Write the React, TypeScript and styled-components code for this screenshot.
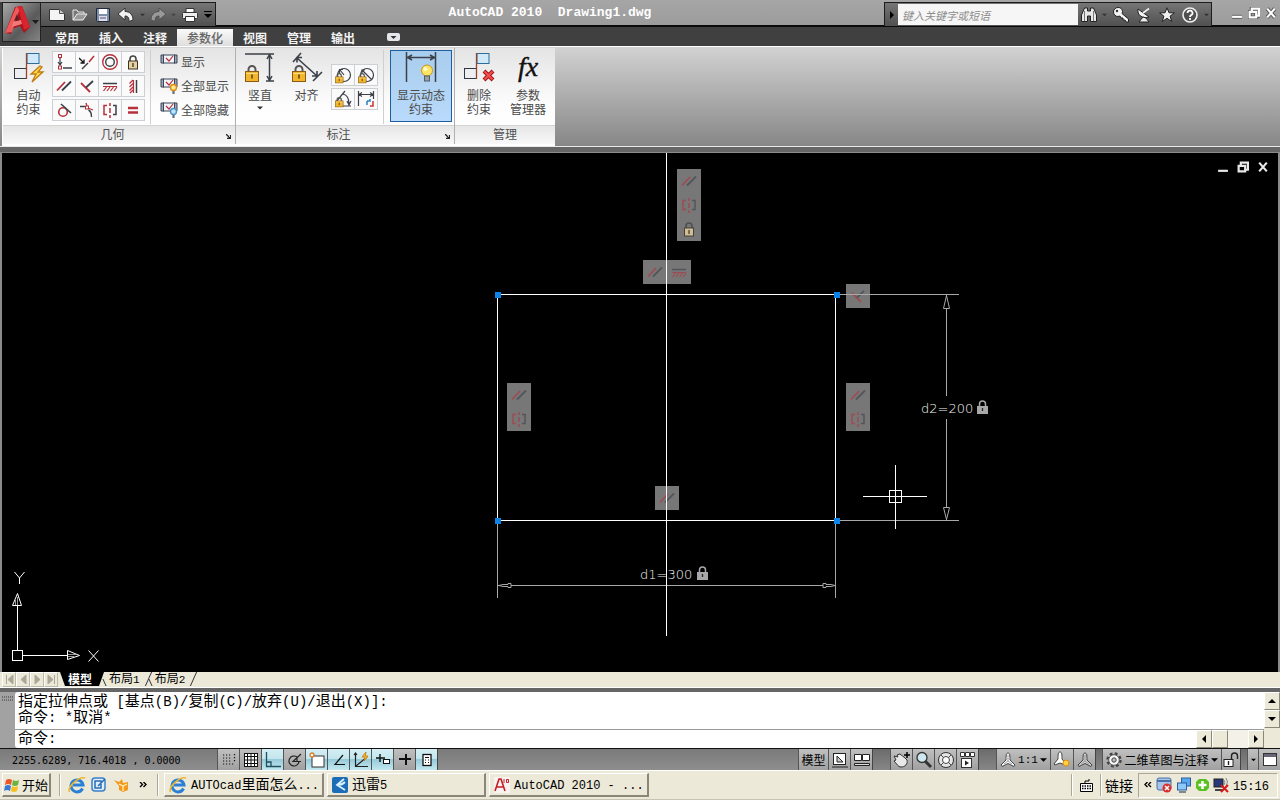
import React from "react";
import styled, { createGlobalStyle, css } from "styled-components";

const CJK = '"Noto Sans CJK SC", sans-serif';
const MONO = '"Liberation Mono", "Noto Sans CJK SC", monospace';

const Global = createGlobalStyle`
  *, *::before, *::after { box-sizing: border-box; }
  html, body { margin: 0; height: 100%; background: #666; }
  #root { height: 100%; }
  body { font-family: ${CJK}; font-size: 12px; line-height: 14px; color: #222; overflow: hidden; }
  button, input { font: inherit; color: inherit; margin: 0; padding: 0; border: 0; background: none; border-radius: 0; outline: 0; }
  svg { display: block; flex: none; }
`;

const Window = styled.div`
  display: flex;
  flex-direction: column;
  min-height: 100vh;
  overflow: hidden;
`;

/* Half-width Latin runs inside full-width Chinese text */
const Half = styled.span<{ $size: number }>`
  font-family: ${MONO};
  font-size: ${(p) => p.$size}px;
`;
function Mixed({ text, latin }: { text: string; latin: number }) {
  return (
    <>
      {text.split(/([\x20-\x7e]+)/).map((part, i) =>
        i % 2 ? <Half key={i} $size={latin}>{part}</Half> : part
      )}
    </>
  );
}

/* ---------- header ---------- */
const Header = styled.header`
  display: flex;
  background: #404040;
  height: 46px;
`;
const AppButton = styled.button`
  width: 39px;
  height: 40px;
  margin: 2px 0 0 2px;
  border: 1px solid #222;
  background: linear-gradient(135deg, #a8a8a8, #5a5a5a 60%, #858585);
`;
const AppSlot = styled.div`
  width: 41px;
  flex: none;
  background: linear-gradient(#a2a2a2 2px, #404040 2px);
`;
const HeaderRows = styled.div`
  flex: 1;
  min-width: 0;
`;
const TitleRow = styled.div`
  display: flex;
  height: 27px;
  background: linear-gradient(#a6a6a6, #9c9c9c);
  border-bottom: 2px solid #0a0a0a;
`;
const bar = css`
  display: flex;
  align-items: center;
  height: 24px;
  margin-top: 2px;
  border: 1px solid #1c1c1c;
  border-bottom: 0;
  background: linear-gradient(#767676, #505050);
`;
const QuickBar = styled.div`
  ${bar}
  width: 175px;
  padding-left: 5px;
  border-left: 0;
`;
const BarButton = styled.button<{ $w: number }>`
  width: ${(p) => p.$w}px;
  height: 20px;
  display: flex;
  align-items: center;
  justify-content: center;
`;
const Title = styled.h1`
  flex: 1;
  margin: 0;
  text-align: center;
  white-space: pre;
  font: bold 13px/26px ${MONO};
  color: #fff;
`;
const SearchBar = styled.form`
  ${bar}
  width: 328px;
`;
const SearchInput = styled.input`
  width: 180px;
  height: 21px;
  padding-left: 4px;
  background: #f6f6f6;
  font-size: 11px;
  &::placeholder { color: #8c8c8c; font-style: italic; opacity: 1; }
`;
const WinButtons = styled.div`
  display: flex;
  align-items: center;
  padding-left: 17px;
  width: 68px;
`;
const Tabs = styled.nav`
  display: flex;
  height: 19px;
  padding-left: 4px;
  align-items: flex-end;
`;
const Tab = styled.button<{ $on?: boolean }>`
  height: 17px;
  padding: 0 10px;
  line-height: 14px;
  font-weight: bold;
  color: #f4f4f4;
  ${(p) => p.$on && css`
    background: linear-gradient(#fafafa, #dedede);
    color: #666;
    font-weight: 500;
  `}
`;
const TabMore = styled.button`
  margin: 0 0 5px 22px;
`;

/* ---------- ribbon ---------- */
const Ribbon = styled.section`
  display: flex;
  height: 101px;
  padding: 1px 0 2px 2px;
  border-top: 1px solid #fff;
  border-bottom: 1px solid #e8e8e8;
  background: linear-gradient(#d2d2d2, #878787);
`;
const Panel = styled.div`
  display: flex;
  flex-direction: column;
  border-right: 1px solid #b0b0b0;
  background: linear-gradient(#e4e4e4, #fdfdfd 60%, #fff);
  box-shadow: 0 2px 0 #fff;
  &:first-child { border-left: 1px solid #fff; }
  &:last-child { border-right: 0; }
`;
const PanelBody = styled.div<{ $pad?: number }>`
  flex: 1;
  display: flex;
  align-items: flex-start;
  padding: 2px 2px 0 ${(p) => p.$pad ?? 2}px;
`;
const PanelTitle = styled.div<{ $launcher?: boolean }>`
  position: relative;
  height: 19px;
  padding-right: ${(p) => (p.$launcher ? 13 : 0)}px;
  line-height: 15px;
  border-top: 1px solid #d4d4d4;
  background: linear-gradient(#e6e6e6, #f8f8f8);
  text-align: center;
  color: #505050;
`;
const Launcher = styled.button`
  position: absolute;
  right: 4px;
  bottom: 5px;
`;
const Big = styled.button<{ $w: number; $on?: boolean }>`
  width: ${(p) => p.$w}px;
  height: 72px;
  display: flex;
  flex-direction: column;
  align-items: center;
  gap: 4px;
  padding-top: 1px;
  border: 1px solid transparent;
  line-height: 14px;
  white-space: pre-line;
  color: #4a4a4a;
  ${(p) => p.$on && css`
    border-color: #1f5f9f;
    background: linear-gradient(#a9cdee, #b9dafa);
  `}
`;
const Grid = styled.div<{ $cols: number; $top?: number }>`
  display: grid;
  grid-template-columns: repeat(${(p) => p.$cols}, 23px);
  row-gap: 2px;
  margin-top: ${(p) => p.$top ?? 1}px;
`;
const Cell = styled.button`
  width: 24px;
  height: 22px;
  display: flex;
  align-items: center;
  justify-content: center;
  border: 1px solid #ccd0d4;
  background: #fafafa;
`;
const Sep = styled.i`
  width: 1px;
  height: 74px;
  margin: 0 6px;
  background: #cfcfcf;
`;
const List = styled.div`
  display: flex;
  flex-direction: column;
  padding: 0 4px 0 3px;
`;
const ListButton = styled.button`
  display: flex;
  align-items: center;
  gap: 3px;
  height: 24px;
  color: #4a4a4a;
`;

/* ---------- drawing area ---------- */
const View = styled.main`
  position: relative;
  flex: 1;
  min-height: 300px;
  margin-top: 5px;
  border: solid #8c8c8c;
  border-width: 1px 2px 0;
  background: #000;
`;
const Drawing = styled.svg`
  position: absolute;
  inset: 0;
  width: 100%;
  height: 100%;
`;
const Ucs = styled.svg`
  position: absolute;
  left: 8px;
  bottom: 0;
`;
const DocButtons = styled.div`
  position: absolute;
  top: 8px;
  right: 9px;
  display: flex;
  gap: 8px;
`;

/* ---------- layout tabs ---------- */
const Sheets = styled.nav`
  display: flex;
  height: 16px;
  padding-left: 2px;
  background: #ece9d8;
  border-bottom: 1px solid #fff;
`;
const SheetNav = styled.button`
  width: 14px;
  height: 15px;
  display: flex;
  align-items: center;
  justify-content: center;
  border: 1px solid;
  border-color: #fff #bdb9a8 #bdb9a8 #fff;
`;
const Sheet = styled.button<{ $on?: boolean }>`
  position: relative;
  height: 14px;
  line-height: 12px;
  padding: 0 8px 0 7px;
  color: #000;
  ${(p) => p.$on ? css`
    margin: 0 -2px 0 2px;
    padding: 0 12px 0 8px;
    background: #000;
    color: #fff;
    font-weight: bold;
    clip-path: polygon(0 0, 100% 0, calc(100% - 5px) 100%, 5px 100%);
  ` : css`
    &::before, &::after {
      content: "";
      position: absolute;
      right: -1px;
      top: 0;
      height: 14px;
      border-right: 1px solid #333;
      transform: skewX(-24deg);
    }
    &::before {
      right: auto;
      left: 2px;
      top: 7px;
      height: 7px;
      transform: skewX(24deg);
    }
  `}
`;

/* ---------- command window ---------- */
const Command = styled.section`
  display: flex;
  height: 56px;
  margin-top: 4px;
  background: #a2a2a2;
`;
const Grip = styled.div`
  width: 15px;
  padding: 4px 0 0 2px;
`;
const CmdText = styled.div`
  flex: 1;
  display: flex;
  flex-direction: column;
  background: #fff;
  border-radius: 3px 0 0 3px;
  font-family: ${MONO};
  font-size: 15px;
  line-height: 16px;
  color: #000;
`;
const History = styled.div`
  height: 38px;
  padding: 2px 0 0 3px;
  border-bottom: 1px solid #999;
  white-space: pre;
  > div { height: 16px; }
`;
const CmdInputRow = styled.div`
  flex: 1;
  display: flex;
  align-items: center;
  padding-left: 3px;
  > input { flex: 1; height: 16px; font-size: 14px; }
`;
const ScrollV = styled.div`
  width: 16px;
  display: flex;
  flex-direction: column;
  background: #ece9d8;
`;
const ScrollH = styled.div`
  display: flex;
  width: 68px;
  height: 18px;
  background: #f3f1e8;
`;
const raised = css`
  border: 1px solid;
  border-color: #fff #8a8778 #8a8778 #fff;
  background: #ece9d8;
`;
const ScrollButton = styled.button`
  ${raised}
  display: flex;
  align-items: center;
  justify-content: center;
  width: 16px;
  height: 18px;
`;
const Spacer = styled.i`
  flex: 1;
`;

/* ---------- status bar ---------- */
const Status = styled.footer`
  display: flex;
  height: 22px;
  border-top: 1px solid #111;
  background: linear-gradient(#7a7a7a, #8e8e8e);
  color: #000;
`;
const Coords = styled.output`
  width: 217px;
  padding-left: 12px;
  font: 10px/24px "DejaVu Sans Mono", monospace;
  white-space: pre;
`;
const StatusButton = styled.button<{ $w?: number; $on?: boolean }>`
  width: ${(p) => p.$w ?? 22}px;
  height: 21px;
  display: flex;
  align-items: center;
  justify-content: center;
  gap: 2px;
  white-space: nowrap;
  border-left: 1px solid #555;
  background: ${(p) =>
    p.$on
      ? "linear-gradient(#d4eef4, #c4e6ee 45%, #96cbd9 50%, #c2e8f0)"
      : "linear-gradient(#c0c0c0, #a0a0a0)"};
`;
const StatusGap = styled.i<{ $w: number }>`
  width: ${(p) => p.$w}px;
  border-left: 1px solid #444;
  background: linear-gradient(#6c6c6c, #868686);
`;

/* ---------- taskbar ---------- */
const Taskbar = styled.footer`
  display: flex;
  align-items: center;
  height: 30px;
  padding: 0 2px;
  border-top: 1px solid #fff;
  border-bottom: 1px solid #c8c4b4;
  background: #ece9d8;
  font-size: 14px;
  line-height: 18px;
  color: #000;
`;
const TaskButton = styled.button<{ $w: number; $start?: boolean }>`
  ${raised}
  border-width: 1px 2px 2px 1px;
  width: ${(p) => p.$w}px;
  height: 24px;
  margin-right: 3px;
  padding: 0 4px;
  display: flex;
  align-items: center;
  gap: 4px;
  white-space: pre;
  ${(p) => p.$start && css`
    padding: 0 1px;
    gap: 1px;
    font-size: 13px;
    margin: 0;
  `}
`;
const Divider = styled.i<{ $m: string }>`
  width: 2px;
  height: 22px;
  margin: ${(p) => p.$m};
  border-left: 1px solid #aca899;
  border-right: 1px solid #fff;
`;
const Launch = styled.button`
  width: 22px;
  height: 22px;
  display: flex;
  align-items: center;
  justify-content: center;
`;
const Tray = styled.div`
  display: flex;
  align-items: center;
  justify-content: space-between;
  width: 140px;
  height: 25px;
  margin-left: 5px;
  padding: 0 8px 0 5px;
  border: 1px solid;
  border-color: #aca899 #fff #fff #aca899;
`;

/* ---------- icons ---------- */
type P = { children?: React.ReactNode; w?: number; h?: number; vb?: string };
const Svg = ({ children, w = 16, h = 16, vb }: P) => (
  <svg width={w} height={h} viewBox={vb ?? `0 0 ${w} ${h}`} fill="none" aria-hidden="true">{children}</svg>
);
const Down = ({ c = "#000", s = 7 }: { c?: string; s?: number }) => (
  <Svg w={s} h={4} vb="0 0 8 4"><path d="M0 0h8L4 4z" fill={c} /></Svg>
);
const R = "#b8303a";
const D = "#3c4048";

const glyphs = {
  coincident: <><path d="M4 4v6M2 8l2 3 2-3" stroke={D} strokeWidth="1.2" /><rect x="2.500" y="0.500" width="3" height="3" stroke={R} /><rect x="2.500" y="12" width="3" height="3" stroke={R} /><path d="M7 14h9" stroke={D} strokeWidth="1.500" /></>,
  collinear: <><path d="M0 4l5 5M5 5.500V9H1.500" stroke="#111" strokeWidth="1.300" /><path d="M3 15l6-6" stroke={D} strokeWidth="1.500" /><path d="M10 8l5-6" stroke={R} strokeWidth="1.500" /></>,
  concentric: <><circle cx="8" cy="8" r="7.300" stroke={R} strokeWidth="1.400" /><circle cx="8" cy="8" r="4.300" stroke={D} strokeWidth="1.400" /></>,
  fix: <><path d="M5 7V5a3 3 0 0 1 6 0v2" stroke="#444" strokeWidth="1.600" /><rect x="3.500" y="7" width="9" height="8" fill="#e8cf9e" stroke="#3b3328" /><path d="M8 9v4" stroke="#3b3328" strokeWidth="1.300" /></>,
  parallel: <><path d="M1 12.500L9 4" stroke={R} strokeWidth="1.800" /><path d="M6 12.500L15 3.500" stroke={D} strokeWidth="1.800" /></>,
  perpendicular: <><path d="M2 5l9 9" stroke={R} strokeWidth="1.800" /><path d="M7 9.500L14 3" stroke={D} strokeWidth="1.800" /></>,
  horizontal: <><path d="M1 5.500h14" stroke={D} strokeWidth="1.500" /><path d="M1 8.500h14M4.500 9l-3 4M8 9l-3 4M11.500 9l-3 4M15 9l-3 4" stroke={R} strokeWidth="1.200" /></>,
  vertical: <><path d="M11.500 2v13" stroke={D} strokeWidth="1.500" /><path d="M8.500 2v13M8 2L4.500 5.500M8 5.500L4.500 9M8 9l-3.500 3.500M8 12l-3 3" stroke={R} strokeWidth="1.200" /></>,
  tangent: <><circle cx="7" cy="10" r="4.300" stroke={R} strokeWidth="1.600" /><path d="M5 2l10 9" stroke={D} strokeWidth="1.600" /></>,
  smooth: <><path d="M1 4.500h5M9.500 8c2 1 3 3 3 7" stroke={D} strokeWidth="1.400" /><path d="M7 1l1 3M9 6l5 2" stroke={R} strokeWidth="1.300" /><rect x="6.500" y="4" width="3" height="3" stroke={R} fill="none" /></>,
  symmetric: <><path d="M5 3.500H2v9h3M8 1v3M8 6v5M8 13v3" stroke={R} strokeWidth="1.500" /><path d="M11 3.500h3v9h-3" stroke={D} strokeWidth="1.500" /></>,
  equal: <path d="M3 6h10M3 10.500h10" stroke={R} strokeWidth="2.400" />,
};
type G = keyof typeof glyphs;
const cells: [G, string][] = [
  ["coincident", "重合"], ["collinear", "共线"], ["concentric", "同心"], ["fix", "固定"],
  ["parallel", "平行"], ["perpendicular", "垂直"], ["horizontal", "水平"], ["vertical", "竖直"],
  ["tangent", "相切"], ["smooth", "平滑"], ["symmetric", "对称"], ["equal", "相等"],
];

const Gold = ({ x, y, s = 1 }: { x: number; y: number; s?: number }) => (
  <g transform={`translate(${x} ${y}) scale(${s})`}>
    <path d="M3.500 7V4.500a3.500 3.500 0 0 1 7 0V7" stroke="#555" strokeWidth="2" />
    <rect x="0.500" y="6.500" width="13" height="10" fill="#f2b62c" stroke="#8c5a10" />
    <path d="M1.500 8.500h11" stroke="#ffe08a" />
    <path d="M7 9.500v4" stroke="#5e3c08" strokeWidth="1.500" />
  </g>
);
const Squares = () => (
  <>
    <rect x="14" y="1.500" width="12" height="10" fill="#cfe8fa" stroke="#2d6d9c" />
    <rect x="1.500" y="16.500" width="12" height="10" fill="#eceef2" stroke="#303844" />
    <path d="M13.500 27V1" stroke="#9a4228" strokeWidth="1.300" />
  </>
);
const AutoIcon = () => (
  <Svg w={32} h={32}><Squares /><path d="M27 14l-9 8h5l-4 8 11-10h-5l4-5z" fill="#ffd84a" stroke="#c07a10" strokeWidth="1.300" /></Svg>
);
const DeleteIcon = () => (
  <Svg w={32} h={32}><Squares /><path d="M21 19l9 9M30 19l-9 9" stroke="#a01010" strokeWidth="4" /><path d="M21.500 19.500l8 8M29.500 19.500l-8 8" stroke="#f25050" strokeWidth="2.200" /></Svg>
);
const VertIcon = () => (
  <Svg w={32} h={32}><path d="M1 2h29M22 29h8M25.500 3v25M23 7l2.500-4.500L28 7M23 24l2.500 4.500L28 24" stroke={D} strokeWidth="1.500" /><Gold x={1} y={13} /></Svg>
);
const AlignIcon = () => (
  <Svg w={32} h={32}><path d="M2 10l8-9M22 29l9-9M6 6l20 18M6 10.500V5.500h5M26 19v5h-5" stroke={D} strokeWidth="1.600" /><Gold x={1} y={13} /></Svg>
);
const DynIcon = () => (
  <Svg w={32} h={32}>
    <path d="M1.500 0v30M30.500 0v30M3 5.500h26M7 3L2.500 5.500 7 8M25 3l4.500 2.500L25 8" stroke={D} strokeWidth="1.500" />
    <circle cx="22" cy="18.500" r="5.500" fill="#ffe564" stroke="#c89418" />
    <circle cx="20.500" cy="17" r="2" fill="#fffbd0" />
    <rect x="19.500" y="24" width="5" height="5" fill="#9aa0a8" stroke="#555c66" />
  </Svg>
);
const FxIcon = () => (
  <Svg w={32} h={32}><text x="6" y="24" fontFamily="Liberation Serif, serif" fontStyle="italic" fontSize="28" fill="#111" stroke="#111" strokeWidth="0.4">fx</text></Svg>
);
const dims = {
  半径: <><circle cx="10" cy="9" r="6.500" stroke={D} strokeWidth="1.200" /><path d="M10 9L6 4M5.500 7V3.500H9" stroke={D} strokeWidth="1.200" /></>,
  直径: <><circle cx="10" cy="9" r="6.500" stroke={D} strokeWidth="1.200" /><path d="M5 4l10 10M5 7V4h3" stroke={D} strokeWidth="1.200" /></>,
  角度: <><path d="M2 12L11 1M8 16h9M9 4c4 1 6 5 6 10M13 11l2 4 2-4" stroke={D} strokeWidth="1.200" /></>,
};
const Eye = ({ bulb }: { bulb?: string }) => (
  <Svg w={18} h={18}>
    <path d="M4 2H1v8h3zM14 2h3v8h-3z" stroke="#3c4658" fill="#9aa6ba" />
    <rect x="3.500" y="2" width="11" height="8" fill="#f2f4f8" stroke="#3c4658" />
    <path d="M6 5l3 3 4-5" stroke={R} strokeWidth="1.200" />
    {bulb && <><circle cx="13.500" cy="10.500" r="3" fill={bulb} stroke={bulb === "#ffe890" ? "#e08a10" : "#4a90c8"} strokeWidth="1.400" /><path d="M13.500 14v3" stroke="#66707c" strokeWidth="2.200" /></>}
  </Svg>
);
const LaunchMark = () => (
  <Svg w={5} h={5}><path d="M0 0l4 4M4.500 1v3.500H1" stroke="#222" strokeWidth="1.300" /></Svg>
);

const Win = ({ kind, c, edge }: { kind: "min" | "max" | "close"; c: string; edge?: string }) => {
  const d = { min: "M1 9h9", max: "M3.500 4V1.500H10V8H8M1.500 4.500h6v5h-6z", close: "M2 1.500l7 8M9 1.500l-7 8" }[kind];
  return (
    <Svg w={12} h={12} vb="0 0 11 11">
      {edge && <path d={d} stroke={edge} strokeWidth="3.600" />}
      <path d={d} stroke={c} strokeWidth="2" />
    </Svg>
  );
};
const Ie = () => (
  <Svg w={18} h={18}>
    <path d="M14.500 12.500a6 6 0 1 1 .5-3.500H5" stroke="#2a7fd6" strokeWidth="3" />
    <path d="M1.500 16C-1 11 11 0 17 2" stroke="#f0b62c" strokeWidth="1.600" />
  </Svg>
);
const Scale = ({ c = "#fff" }: { c?: string }) => (
  <Svg w={16} h={16}><path d="M8 1c2 0 2 3 2 7l5 5-1 1.500-6-3-6 3L1 13l5-5c0-4 0-7 2-7z" fill={c} stroke="#444" /><path d="M8 3v6l4 3M8 9l-4 3" stroke="#999" /></Svg>
);

const toggles: [string, boolean, React.ReactNode][] = [
  ["捕捉", false, <path d="M2 3h9M2 6h9M2 9h9M2 12h12M13.500 2v2M13.500 5v5" stroke="#111" strokeWidth="1.200" strokeDasharray="1.200 1.800" />],
  ["栅格", false, <><rect x="1.500" y="1.500" width="13" height="13" fill="#fff" stroke="#111" /><path d="M4.500 1v14M8 1v14M11.500 1v14M1 4.500h14M1 8h14M1 11.500h14" stroke="#111" /></>],
  ["正交", true, <path d="M1.500 0v14.500H16M2 10h4v4" stroke="#20505f" strokeWidth="1.300" />],
  ["极轴", false, <><path d="M10 5a5 5 0 1 0 2 4" stroke="#222" strokeWidth="1.200" /><path d="M14 2L6 9.500h8M10 6v3" stroke="#222" strokeWidth="1.200" /></>],
  ["对象捕捉", true, <><rect x="3" y="4" width="12" height="11" fill="#fff" stroke="#333" /><circle cx="3" cy="3" r="2" fill="#fff" stroke="#e07820" strokeWidth="1.300" /></>],
  ["对象追踪", true, <path d="M12 3L4 12.500h10" stroke="#111" strokeWidth="1.200" />],
  ["动态 UCS", true, <><path d="M2.500 1v13.500H15M3 14L14 5M1 3l1.500-2L4 3" stroke="#222" strokeWidth="1.200" /><path d="M13 0l-4 5h3l-1 4 4-5h-3z" fill="#ffcf40" stroke="#d08010" /></>],
  ["动态输入", true, <><path d="M1 6h9M5 2v8" stroke="#111" strokeWidth="1.400" /><rect x="8.500" y="7.500" width="6" height="4" fill="#fff" stroke="#111" /></>],
  ["线宽", false, <path d="M2 7h12M9 2v11" stroke="#111" strokeWidth="2" />],
  ["快捷特性", true, <><rect x="4" y="2.500" width="8" height="11" fill="#fff" stroke="#111" strokeWidth="1.300" /><path d="M6 5.500h4M6 8h1M9 8h1M6 10.500h1M9 10.500h1" stroke="#111" strokeWidth="1.200" /></>],
];

/* Constraint badge placed on the drawing */
const Badge = ({ x, y, items, row }: { x: number; y: number; items: G[]; row?: boolean }) => (
  <g>
    <rect x={x} y={y} width={row ? 24 * items.length : 24} height={row ? 24 : 24 * items.length} fill="#777" />
    {items.map((g, i) => (
      <g key={i} opacity={g === "fix" ? 0.8 : 0.6} shapeRendering="auto"
        transform={`translate(${x + 4 + (row ? 24 * i : 0)} ${y + 4 + (row ? 0 : 24 * i)})`}>{glyphs[g]}</g>
    ))}
  </g>
);
const GreyLock = ({ x, y }: { x: number; y: number }) => (
  <g transform={`translate(${x} ${y})`} shapeRendering="auto">
    <path d="M2.500 7V4a3 3 0 0 1 6 0v3" stroke="#a8a8a8" strokeWidth="1.500" />
    <rect y="6" width="11" height="8" fill="#a8a8a8" />
    <path d="M5.500 8v3" stroke="#222" strokeWidth="1.300" />
  </g>
);

function Model() {
  const text = { fontFamily: "DejaVu Sans, sans-serif", fontWeight: 200, fontSize: 13, fill: "#f4f4f4" };
  return (
    <Drawing fill="none" shapeRendering="crispEdges" role="img" aria-label="Drawing1">
      <g transform="translate(-2 -153)">
        <Badge x={677} y={169} items={["parallel", "symmetric", "fix"]} />
        <Badge x={643} y={260} items={["parallel", "horizontal"]} row />
        <Badge x={846} y={284} items={["perpendicular"]} />
        <Badge x={846} y={383} items={["parallel", "symmetric"]} />
        <Badge x={507} y={383} items={["parallel", "symmetric"]} />
        <Badge x={655} y={486} items={["parallel"]} />
        <path stroke="#a8a8a8" d="M836 294.500h123M836 520.500h123M497.500 521v77M835.500 521v77M498 585.500h338M946.500 295v101M946.500 419v101" />
        <path stroke="#a8a8a8" fill="#000" shapeRendering="auto" d="M499 585.500l4-1h5v-1h3v4h-3v-1h-5zM835 585.500l-4-1h-5v-1h-3v4h3v-1h5zM946.500 295.500l-3 13h6zM946.500 519.500l-3-12h6z" />
        <path stroke="#fff" d="M666.500 153v483M497 294.500h339M497 520.500h339M497.500 294v227M835.500 294v227" />
        <path stroke="#fff" d="M863 496.500h64M895.500 465v64M889.500 490.500h12v12h-12z" />
        {[[495, 292], [834, 292], [495, 518], [834, 518]].map(([x, y]) => (
          <rect key={`${x}-${y}`} x={x} y={y} width="6" height="6" fill="#0a84e8" />
        ))}
        <text x="640" y="579" {...text}>d1=300</text>
        <GreyLock x={697} y={566} />
        <text x="921" y="413" {...text}>d2=200</text>
        <GreyLock x={977} y={400} />
      </g>
    </Drawing>
  );
}

export default function App() {
  return (
    <Window>
      <Global />
      <Header>
        <AppSlot>
          <AppButton aria-label="应用程序菜单">
            <Svg w={37} h={38}>
              <path d="M2 30L12 4l7-1 8 21-6 6-4-7-8 3-1 5z" fill="#a8141c" />
              <path d="M2 30L13 4l4 1-8 24z" fill="#ee5a5a" />
              <path d="M15 4l4-1 8 21-6 3z" fill="#d8242c" />
              <path d="M10 19l8-2 1 4-10 3z" fill="#f07878" />
              <path d="M14 11l2 6-5 1z" fill="#5c2024" />
              <path d="M29 17h7l-3.500 4z" fill="#1c1c1c" />
            </Svg>
          </AppButton>
        </AppSlot>
        <HeaderRows>
          <TitleRow>
            <QuickBar>
              <BarButton $w={22} aria-label="新建"><Svg><path d="M.5 2.500h10l5 4v7H.5z" fill="#f4f4f4" stroke="#333" /><path d="M10.500 2.500v4h5" fill="#ccc" stroke="#555" /></Svg></BarButton>
              <BarButton $w={24} aria-label="打开"><Svg><path d="M1 13V3h4l1 2h6v3" fill="#777" stroke="#e8e8e8" /><path d="M1 13l4-6h10l-4 6z" fill="#999" stroke="#f0f0f0" /></Svg></BarButton>
              <BarButton $w={22} aria-label="保存"><Svg><path d="M1.500 1.500h13v13h-12l-1-1z" fill="#8090a8" stroke="#20283c" /><rect x="4" y="2" width="8" height="5" fill="#fff" /><rect x="4" y="9" width="8" height="5" fill="#dde" /><path d="M5 11h6" stroke="#556" /></Svg></BarButton>
              <BarButton $w={24} aria-label="放弃"><Svg><path d="M0 7l7-6v3.500C12 4.500 15 8 15 13l-4 1.500c0-4-1-5.500-4-5.500v4z" fill="#f2f2f2" stroke="#333" /></Svg></BarButton>
              <BarButton $w={9} aria-label="放弃列表"><Down c="#333" s={5} /></BarButton>
              <BarButton $w={22} aria-label="重做"><Svg><path d="M16 7L9 1v3.500C4 4.500 1 8 1 13l4 1.500C5 10.500 6 9 9 9v4z" fill="#999" stroke="#505050" /></Svg></BarButton>
              <BarButton $w={9} aria-label="重做列表"><Down c="#444" s={5} /></BarButton>
              <BarButton $w={24} aria-label="打印"><Svg><path d="M4 6V1.500h8V6" fill="#fff" stroke="#333" /><rect x=".5" y="5.500" width="15" height="6" rx="1" fill="#eee" stroke="#333" /><path d="M3.500 9.500h9v5h-9z" fill="#fff" stroke="#333" /></Svg></BarButton>
              <BarButton $w={12} aria-label="自定义"><Svg w={8} h={8}><path d="M0 .5h8" stroke="#000" /><path d="M0 3h8L4 7z" fill="#000" /></Svg></BarButton>
            </QuickBar>
            <Title>{"AutoCAD 2010  Drawing1.dwg"}</Title>
            <SearchBar role="search" onSubmit={(e) => e.preventDefault()}>
              <BarButton type="button" $w={13} aria-label="展开"><Svg w={4} h={8}><path d="M0 0l4 4-4 4z" fill="#000" /></Svg></BarButton>
              <SearchInput aria-label="搜索" placeholder="键入关键字或短语" />
              <BarButton $w={22} aria-label="查找"><Svg><path d="M3.500 1h3v3h3V1h3L15.500 8v6.500h-6V9h-3v5.500h-6V8z" fill="#e8e8e8" stroke="#222" /><path d="M3.500 4v10M12.500 4v10" stroke="#777" /></Svg></BarButton>
              <BarButton type="button" $w={9} aria-label="搜索选项"><Down c="#333" s={5} /></BarButton>
              <BarButton type="button" $w={24} aria-label="速博应用中心"><Svg><path d="M5 .5a4.500 4.500 0 0 0 0 9l2-.5 1 2h2v2h2l1 2h2.500v-3L9 6.500l.5-2A4.500 4.500 0 0 0 5 .5z" fill="#f4f4f4" stroke="#222" /><circle cx="4" cy="4" r="1.200" fill="#333" /></Svg></BarButton>
              <BarButton type="button" $w={22} aria-label="通讯中心"><Svg><path d="M2 2c-1 6 4 10 11 8z" fill="#f4f4f4" stroke="#222" /><path d="M7 6l6-4.500" stroke="#eee" strokeWidth="1.600" /><path d="M7 10l-4 5h10l-3-4z" fill="#eee" stroke="#222" /></Svg></BarButton>
              <BarButton type="button" $w={23} aria-label="收藏夹"><Svg><path d="M8 .8l2 5h5.400l-4.300 3.300 1.600 5.400L8 11.300l-4.700 3.200 1.600-5.400L.6 5.800H6z" fill="#f0f0f0" stroke="#222" /></Svg></BarButton>
              <BarButton type="button" $w={24} aria-label="帮助"><Svg w={18} h={18}><circle cx="9" cy="9" r="7" fill="#505050" stroke="#f0f0f0" strokeWidth="1.600" /><path d="M6.500 7a2.500 2.500 0 1 1 3.500 2.300Q9 10 9 11M9 12v2" stroke="#fff" strokeWidth="1.800" /></Svg></BarButton>
              <BarButton type="button" $w={8} aria-label="帮助选项"><Down c="#333" s={5} /></BarButton>
            </SearchBar>
            <WinButtons>
              <BarButton $w={16} aria-label="最小化"><Win kind="min" c="#fff" edge="#555" /></BarButton>
              <BarButton $w={17} aria-label="还原"><Win kind="max" c="#fff" edge="#555" /></BarButton>
              <BarButton $w={17} aria-label="关闭"><Win kind="close" c="#fff" edge="#555" /></BarButton>
            </WinButtons>
          </TitleRow>
          <Tabs>
            {["常用", "插入", "注释", "参数化", "视图", "管理", "输出"].map((t) => (
              <Tab key={t} $on={t === "参数化"}>{t}</Tab>
            ))}
            <TabMore aria-label="最小化功能区"><Svg w={13} h={8}><rect width="13" height="8" rx="2" fill="#e4e6ea" /><path d="M3.500 3h6l-3 3z" fill="#333" /></Svg></TabMore>
          </Tabs>
        </HeaderRows>
      </Header>

      <Ribbon>
        <Panel>
          <PanelBody>
            <Big $w={47}><AutoIcon />{"自动\n约束"}</Big>
            <Grid $cols={4}>
              {cells.map(([g, label]) => <Cell key={g} aria-label={label}><Svg>{glyphs[g]}</Svg></Cell>)}
            </Grid>
            <Sep />
            <List>
              <ListButton><Eye />显示</ListButton>
              <ListButton><Eye bulb="#ffe890" />全部显示</ListButton>
              <ListButton><Eye bulb="#c4e4fa" />全部隐藏</ListButton>
            </List>
          </PanelBody>
          <PanelTitle $launcher>几何<Launcher aria-label="约束设置"><LaunchMark /></Launcher></PanelTitle>
        </Panel>
        <Panel>
          <PanelBody>
            <Big $w={44}><VertIcon /><span>竖直</span><Down c="#333" s={6} /></Big>
            <Big $w={49}><AlignIcon />对齐</Big>
            <Grid $cols={2} $top={14}>
              {Object.entries(dims).map(([k, d]) => <Cell key={k} aria-label={k}><Svg w={18} h={18}>{d}<Gold x={1} y={7} s={0.6} /></Svg></Cell>)}
              <Cell aria-label="转换"><Svg w={18} h={18}><path d="M1.500 1v15M16.500 1v8M2 4.500h14M5 2.500l-3 2 3 2M13 2.500l3 2-3 2" stroke={D} strokeWidth="1.200" /><path d="M10 11h3v-2M10 11v4" stroke="#2880c8" strokeWidth="1.500" /><path d="M16 11v5h-3" stroke="#d03030" strokeWidth="1.500" /></Svg></Cell>
            </Grid>
            <Sep />
            <Big $w={62} $on><DynIcon />{"显示动态\n约束"}</Big>
          </PanelBody>
          <PanelTitle $launcher>标注<Launcher aria-label="标注设置"><LaunchMark /></Launcher></PanelTitle>
        </Panel>
        <Panel>
          <PanelBody $pad={0}>
            <Big $w={48}><DeleteIcon />{"删除\n约束"}</Big>
            <Big $w={50}><FxIcon />{"参数\n管理器"}</Big>
          </PanelBody>
          <PanelTitle>管理</PanelTitle>
        </Panel>
      </Ribbon>

      <View>
        <Model />
        <Ucs width="94" height="102" fill="none" stroke="#fff" aria-label="UCS">
          <path shapeRendering="crispEdges" d="M2.500 80.500h10v10h-10zM7.500 36v44M13 85.500h44" />
          <path d="M7.500 23.500l-5 12h9zM69.500 85.500l-12-5v9z" />
          <path d="M7.500 27v8M5.500 30v5M58 84.500h8M58 86.500h6" stroke="#999" />
          <path d="M78.500 80.500l10 11M88.500 80.500l-10 11M4.500 2l5 6 5-6M9.500 8v6" />
        </Ucs>
        <DocButtons>
          <button aria-label="最小化图形"><Win kind="min" c="#e8e8e8" /></button>
          <button aria-label="还原图形"><Win kind="max" c="#e8e8e8" /></button>
          <button aria-label="关闭图形"><Win kind="close" c="#e8e8e8" /></button>
        </DocButtons>
      </View>

      <Sheets>
        {[["第一个", "M1.500 0v9M8 0L3 4.500 8 9z"], ["上一个", "M7 0L2 4.500 7 9z"], ["下一个", "M2 0l5 4.500L2 9z"], ["最后一个", "M7.500 0v9M1 0l5 4.500L1 9z"]].map(([l, d]) => (
          <SheetNav key={l} aria-label={l}><Svg w={9} h={9}><path d={d} fill="#aaa697" stroke="#aaa697" /></Svg></SheetNav>
        ))}
        <Sheet $on>模型</Sheet>
        <Sheet><Mixed text="布局1" latin={11} /></Sheet>
        <Sheet><Mixed text="布局2" latin={11} /></Sheet>
      </Sheets>

      <Command>
        <Grip><Svg w={12} h={5}><path d="M0 1h12M0 4h12" stroke="#333" strokeDasharray="1 1" /></Svg></Grip>
        <CmdText>
          <History>
            <div><Mixed text="指定拉伸点或 [基点(B)/复制(C)/放弃(U)/退出(X)]:" latin={14} /></div>
            <div><Mixed text="命令: *取消*" latin={14} /></div>
          </History>
          <CmdInputRow>
            <label htmlFor="cmd"><Mixed text="命令:" latin={14} /></label>
            <input id="cmd" />
            <ScrollH>
              <ScrollButton aria-label="向左"><Svg w={4} h={8}><path d="M4 0v8L0 4z" fill="#000" /></Svg></ScrollButton>
              <ScrollButton aria-label="滑块" />
              <Spacer />
              <ScrollButton aria-label="向右"><Svg w={4} h={8}><path d="M0 0v8l4-4z" fill="#000" /></Svg></ScrollButton>
            </ScrollH>
          </CmdInputRow>
        </CmdText>
        <ScrollV>
          <ScrollButton aria-label="向上"><Svg w={8} h={4}><path d="M0 4h8L4 0z" fill="#000" /></Svg></ScrollButton>
          <ScrollButton aria-label="向下"><Down s={8} /></ScrollButton>
        </ScrollV>
      </Command>

      <Status>
        <Coords>{"2255.6289, 716.4018 , 0.0000"}</Coords>
        {toggles.map(([l, on, d]) => <StatusButton key={l} $on={on} aria-label={l} aria-pressed={on}><Svg>{d}</Svg></StatusButton>)}
        <StatusGap $w={1} />
        <Spacer />
        <StatusButton $w={30}>模型</StatusButton>
        <StatusButton aria-label="布局"><Svg><rect x="1.500" y="1.500" width="12" height="11" fill="#fff" stroke="#222" /><path d="M5 4v6h6zM0 15h16" fill="#ccc" stroke="#222" /></Svg></StatusButton>
        <StatusButton aria-label="快速查看图形"><Svg><path d="M.5 2.500h7v6h-7zM8.500 2.500h7v6h-7z" fill="#fff" stroke="#222" /><path d="M.5 11.500h15v2H.5z" fill="#ddd" stroke="#222" /></Svg></StatusButton>
        <StatusGap $w={18} />
        <StatusButton aria-label="平移"><Svg w={18} h={18}><path d="M1 5l4 1-1-2 3-1 5 4 2 2c1 4-2 7-6 7-3 0-4-3-7-6l2-1z" fill="#e8e8e8" stroke="#333" /><path d="M14 1v6M11 4h6" stroke="#000" strokeWidth="1.500" /></Svg></StatusButton>
        <StatusButton aria-label="缩放"><Svg w={18} h={18}><path d="M10 10l6 6" stroke="#333" strokeWidth="3" /><circle cx="7" cy="6.500" r="5" fill="#cfe8f0" stroke="#333" strokeWidth="1.300" /></Svg></StatusButton>
        <StatusButton aria-label="控制盘"><Svg w={18} h={18}><circle cx="9" cy="9" r="7.500" fill="#e6e6e6" stroke="#333" /><circle cx="9" cy="9" r="3.500" fill="#fff" stroke="#444" /><path d="M4 4l2.500 2.500M14 4l-2.500 2.500M4 14l2.500-2.500M14 14l-2.500-2.500" stroke="#444" /></Svg></StatusButton>
        <StatusButton aria-label="运动"><Svg><path d="M.5 .5h4v4h-4zM5.500 .5h4v4h-4zM10.500 .5h4v4h-4z" fill="#fff" stroke="#333" /><rect x="1.500" y="6.500" width="10" height="9" fill="#fff" stroke="#333" /><path d="M5 8.500v5l4-2.500z" fill="#222" /></Svg></StatusButton>
        <StatusGap $w={18} />
        <StatusButton $w={54}><Scale /><Mixed text="1:1" latin={11} /><Down /></StatusButton>
        <StatusButton $w={23} aria-label="注释可见性"><Svg w={18} h={18}><path d="M7 1c2 0 2 3 2 7l4 5-1 1-5-2-5 2-1-1 4-5c0-4 0-7 2-7z" fill="#fff" stroke="#444" /><circle cx="13" cy="12" r="3" fill="#ffd040" stroke="#e08a10" /></Svg></StatusButton>
        <StatusButton aria-label="自动缩放"><Scale c="#d0d0d0" /></StatusButton>
        <StatusGap $w={7} />
        <StatusButton $w={119}>
          <Svg w={16} h={16}><circle cx="8" cy="8" r="6.500" stroke="#444" strokeWidth="2.400" strokeDasharray="2.800 2.300" /><circle cx="8" cy="8" r="5.300" fill="#f8f8f8" stroke="#555" /><circle cx="8" cy="8" r="2.200" fill="#bbb" stroke="#444" /></Svg>
          二维草图与注释<Down />
        </StatusButton>
        <StatusButton $w={19} aria-label="锁定"><Svg><rect x="1" y="7.500" width="9" height="7" fill="#fff" stroke="#222" /><path d="M8.500 7V4a3 3 0 0 1 6 0v3M5.500 9v4" stroke="#222" strokeWidth="1.400" /></Svg></StatusButton>
        <StatusGap $w={7} />
        <StatusButton $w={11} aria-label="状态栏菜单"><Down s={5} /></StatusButton>
        <StatusButton aria-label="全屏显示"><Svg><rect x="1.500" y="1.500" width="13" height="12" fill="#fff" stroke="#333" /><path d="M2 3.500h12" stroke="#667" strokeWidth="3" /></Svg></StatusButton>
      </Status>

      <Taskbar>
        <TaskButton $w={49} $start>
          <Svg w={17} h={16}><path d="M2 3q3-2 6 0L7 8q-3-2-6 0z" fill="#e8562a" /><path d="M9 3q3 2 6 0l-1 5q-3 2-6 0z" fill="#6cb33e" /><path d="M1 9q3-2 6 0l-1 5q-3-2-6 0z" fill="#3a78d8" /><path d="M8 9q3 2 6 0l-1 5q-3 2-6 0z" fill="#f4c020" /></Svg>
          开始
        </TaskButton>
        <Divider $m="0 5px 0 8px" />
        <Launch aria-label="Internet Explorer"><Ie /></Launch>
        <Launch aria-label="显示桌面"><Svg><rect x="1" y="1" width="13" height="13" rx="3" fill="#dceeff" stroke="#3a80c8" strokeWidth="1.500" /><path d="M4 4h6v7H4zM7 9l7-7" stroke="#2a6cb0" strokeWidth="1.500" /></Svg></Launch>
        <Launch aria-label="工具"><Svg><path d="M1 3l5 2 3-3 1 4 5-1v8l-5 2-4-2v-4z" fill="#f39a1e" /><path d="M6 7l4 2 4-2M10 9v5" stroke="#fff0c0" strokeWidth="1.300" /></Svg></Launch>
        <Launch aria-label="更多"><Svg w={8} h={6}><path d="M1 0l2.500 2.500L1 5M4.500 0L7 2.500 4.500 5" stroke="#000" strokeWidth="1.400" /></Svg></Launch>
        <Divider $m="0 5px 0 3px" />
        <TaskButton $w={160}><Ie /><span><Mixed text="AUTOcad里面怎么..." latin={12} /></span></TaskButton>
        <TaskButton $w={159}><Svg w={16} h={16}><rect width="16" height="16" rx="2" fill="#1c6cb8" /><path d="M12 2L5 8l8 5M6 8c3 0 5-1 7-3" stroke="#d8f0ff" strokeWidth="1.800" /></Svg><span><Mixed text="迅雷5" latin={12} /></span></TaskButton>
        <TaskButton $w={160}><Svg w={16} h={16}><rect width="16" height="16" fill="#f8f2f0" /><path d="M1 14L5 2h2l4 12M3 10h6" stroke="#c81c24" strokeWidth="1.600" /><path d="M10 2v4M12.500 2.500h2v3h-2z" stroke="#c81c24" /></Svg><span><Mixed text="AutoCAD 2010 - ..." latin={12} /></span></TaskButton>
        <Spacer />
        <Divider $m="0 7px 0 0" />
        <Svg w={13} h={14}><path d="M.5 5.500h12v8H.5z" fill="#fff" stroke="#000" /><path d="M2 8h10M2 10.500h10" stroke="#000" strokeDasharray="1.500 1" strokeWidth="1.500" /><path d="M5 5V3h4V1" stroke="#000" /></Svg>
        <Divider $m="0 3px 0 7px" />
        <span>链接</span>
        <Tray>
          <Svg w={8} h={6}><path d="M3.500 0L1 2.500 3.500 5M7 0L4.500 2.500 7 5" stroke="#000" strokeWidth="1.400" /></Svg>
          <Svg><rect x="1" y="1" width="14" height="12" rx="2" fill="#a8c4e8" stroke="#4a70a8" /><path d="M1 4h14" stroke="#4a70a8" strokeWidth="2" /><circle cx="11" cy="11" r="4.500" fill="#d83030" /><path d="M9 9l4 4M13 9l-4 4" stroke="#fff" strokeWidth="1.500" /></Svg>
          <Svg><rect x="5.500" y="1" width="9" height="8" fill="#58a8f0" stroke="#2a60a0" /><rect x="1.500" y="6" width="9" height="7" fill="#8cc8fa" stroke="#2a60a0" /><path d="M3 15h7" stroke="#667" strokeWidth="1.500" /></Svg>
          <Svg w={13} h={14}><path d="M3 1h7l3 3v6l-3 3H3l-3-3V4z" fill="#58c020" /><path d="M6.500 3v8M2.500 7h8" stroke="#fff" strokeWidth="2.600" /></Svg>
          <Svg><rect x="1" y="2" width="9" height="8" fill="#283878" stroke="#222" /><path d="M2 13h8" stroke="#444" strokeWidth="2" /><path d="M11 3q2 2 0 5M13 1q3 4 0 8" stroke="#888" /><path d="M8 8l7 7M15 8l-7 7" stroke="#d81818" strokeWidth="2" /></Svg>
          <time><Mixed text="15:16" latin={12} /></time>
        </Tray>
      </Taskbar>
    </Window>
  );
}
